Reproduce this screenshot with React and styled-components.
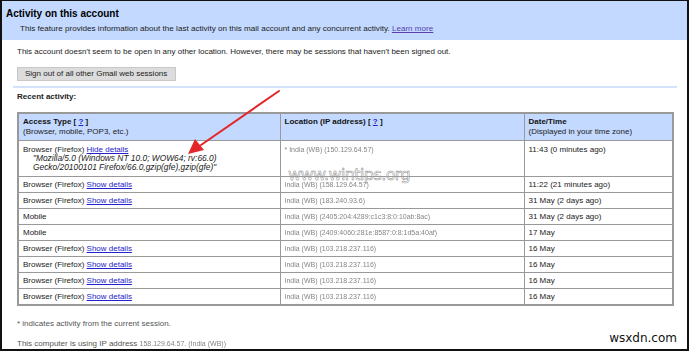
import React from "react";
import styled, { createGlobalStyle } from "styled-components";

const GlobalStyle = createGlobalStyle`
  html, body { margin: 0; padding: 0; background: #fff; }
  body { font-family: "Liberation Sans", Arial, sans-serif; color: #222; }
`;

const Frame = styled.div`
  position: relative;
  width: 689px;
  height: 351px;
  box-sizing: border-box;
  border-style: solid;
  border-color: #111;
  border-width: 1px 2px 2px 2px;
  overflow: hidden;
  background: #fff;
`;

const HeaderBand = styled.div`
  background: #c3d9ff;
  height: 39px;
  box-sizing: border-box;
  padding: 6px 0 0 4px;
`;

const Title = styled.div`
  font-size: 10px;
  line-height: 13px;
  font-weight: bold;
  color: #000;
`;

const Subtitle = styled.div`
  font-size: 8.1px;
  line-height: 10px;
  margin: 4px 0 0 14px;
  color: #222;
`;

const Link = styled.a`
  color: ${(p) => (p.$visited ? "#5a3fb0" : "#2222cc")};
  text-decoration: underline;
  cursor: pointer;
`;

const Body = styled.div`
  padding-left: 15px;
`;

const Para = styled.div`
  font-size: 8px;
  line-height: 10px;
  margin-top: ${(p) => p.$mt || 0}px;
  color: ${(p) => (p.$muted ? "#555" : "#222")};
  font-weight: ${(p) => (p.$bold ? "bold" : "normal")};
`;

const Button = styled.button`
  display: block;
  margin-top: 10px;
  width: 159px;
  height: 14px;
  padding: 0 0 0 7px;
  text-align: left;
  font-family: "Liberation Sans", Arial, sans-serif;
  font-size: 8px;
  line-height: 12px;
  color: #222;
  background: #dcdcdc;
  border: 1px solid #c8c8c8;
  border-radius: 0;
`;

const Separator = styled.div`
  margin: 5px 0 0 -4px;
  width: 664px;
  height: 2px;
  background: #d4e2fb;
`;

const Table = styled.table`
  margin-top: 10px;
  width: 655px;
  border-collapse: collapse;
  table-layout: fixed;
  border: 2px solid #999;
  font-size: 8px;
`;

const Th = styled.th`
  background: #c3d9ff;
  border: 1px solid #999;
  text-align: left;
  vertical-align: top;
  padding: 3px 4px 0 4px;
  height: 23px;
  line-height: 10px;
  font-weight: normal;
  color: #222;
`;

const ThBold = styled.b`
  font-weight: bold;
  color: #111;
`;

const Td = styled.td`
  border: 1px solid #999;
  padding: ${(p) => (p.$tall ? "4px 4px 0 4px" : "0 4px")};
  height: ${(p) => (p.$tall ? 31 : 15)}px;
  vertical-align: ${(p) => (p.$tall ? "top" : "middle")};
  line-height: ${(p) => (p.$tall ? 9 : 10)}px;
  color: #222;
  white-space: nowrap;
  overflow: hidden;
`;

const Agent = styled.div`
  font-style: italic;
  font-size: 8.4px;
  padding-left: 10px;
  line-height: 9px;
`;

const Blurred = styled.span`
  font-size: 7px;
  color: #858585;
  filter: blur(0.45px);
`;

const Overlay = styled.svg`
  position: absolute;
  left: 0;
  top: 0;
  pointer-events: none;
`;

const Watermark = styled.div`
  position: absolute;
  left: 286px;
  top: 164px;
  font-family: "DejaVu Sans", sans-serif;
  font-size: 16px;
  letter-spacing: -0.6px;
  color: rgba(255, 255, 255, 0.2);
  -webkit-text-stroke: 0.5px #8a8a8a;
  pointer-events: none;
`;

const SiteMark = styled.div`
  position: absolute;
  right: 10px;
  bottom: 4px;
  font-family: "DejaVu Sans", sans-serif;
  font-size: 12px;
  color: #111;
`;

const rows = [
  { type: "browser", loc: "India (WB) (158.129.64.57)", date: "11:22 (21 minutes ago)" },
  { type: "browser", loc: "India (WB) (183.240.93.6)", date: "31 May (2 days ago)" },
  { type: "mobile", loc: "India (WB) (2405:204:4289:c1c3:8:0:10ab:8ac)", date: "31 May (2 days ago)" },
  { type: "mobile", loc: "India (WB) (2409:4060:281e:8587:0:8:1d5a:40af)", date: "17 May" },
  { type: "browser", loc: "India (WB) (103.218.237.116)", date: "16 May" },
  { type: "browser", loc: "India (WB) (103.218.237.116)", date: "16 May" },
  { type: "browser", loc: "India (WB) (103.218.237.116)", date: "16 May" },
  { type: "browser", loc: "India (WB) (103.218.237.116)", date: "16 May" },
];

export default function App() {
  return (
    <>
      <GlobalStyle />
      <Frame>
        <HeaderBand>
          <Title>Activity on this account</Title>
          <Subtitle>
            This feature provides information about the last activity on this mail account and any concurrent activity.{" "}
            <Link $visited>Learn more</Link>
          </Subtitle>
        </HeaderBand>
        <Body>
          <Para $mt={7}>
            This account doesn't seem to be open in any other location. However, there may be sessions that haven't been signed out.
          </Para>
          <Button>Sign out of all other Gmail web sessions</Button>
          <Separator />
          <Para $mt={4} $bold>Recent activity:</Para>
          <Table>
            <colgroup>
              <col style={{ width: 262 }} />
              <col style={{ width: 244 }} />
              <col style={{ width: 149 }} />
            </colgroup>
            <thead>
              <tr>
                <Th>
                  <ThBold>Access Type [ <Link>?</Link> ]</ThBold>
                  <br />
                  (Browser, mobile, POP3, etc.)
                </Th>
                <Th>
                  <ThBold>Location (IP address) [ <Link>?</Link> ]</ThBold>
                </Th>
                <Th>
                  <ThBold>Date/Time</ThBold>
                  <br />
                  (Displayed in your time zone)
                </Th>
              </tr>
            </thead>
            <tbody>
              <tr>
                <Td $tall>
                  Browser (Firefox) <Link>Hide details</Link>
                  <Agent>
                    "Mozilla/5.0 (Windows NT 10.0; WOW64; rv:66.0)
                    <br />
                    Gecko/20100101 Firefox/66.0,gzip(gfe),gzip(gfe)"
                  </Agent>
                </Td>
                <Td $tall>
                  <Blurred>* India (WB) (150.129.64.57)</Blurred>
                </Td>
                <Td $tall>11:43 (0 minutes ago)</Td>
              </tr>
              {rows.map((r, i) => (
                <tr key={i}>
                  <Td>
                    {r.type === "browser" ? (
                      <>
                        Browser (Firefox) <Link>Show details</Link>
                      </>
                    ) : (
                      "Mobile"
                    )}
                  </Td>
                  <Td>
                    <Blurred>{r.loc}</Blurred>
                  </Td>
                  <Td>{r.date}</Td>
                </tr>
              ))}
            </tbody>
          </Table>
          <Para $mt={13} $muted>* indicates activity from the current session.</Para>
          <Para $mt={10} $muted>
            This computer is using IP address <Blurred>158.129.64.57. (India (WB))</Blurred>
          </Para>
        </Body>
        <Watermark>www.wintips.org</Watermark>
        <SiteMark>wsxdn.com</SiteMark>
        <Overlay width="689" height="351" viewBox="0 0 689 351">
          <line x1="277" y1="90" x2="199" y2="144" stroke="#e3262a" strokeWidth="2" strokeLinecap="round" />
          <polygon points="186,153 193,138 202,149" fill="#e3262a" />
        </Overlay>
      </Frame>
    </>
  );
}
